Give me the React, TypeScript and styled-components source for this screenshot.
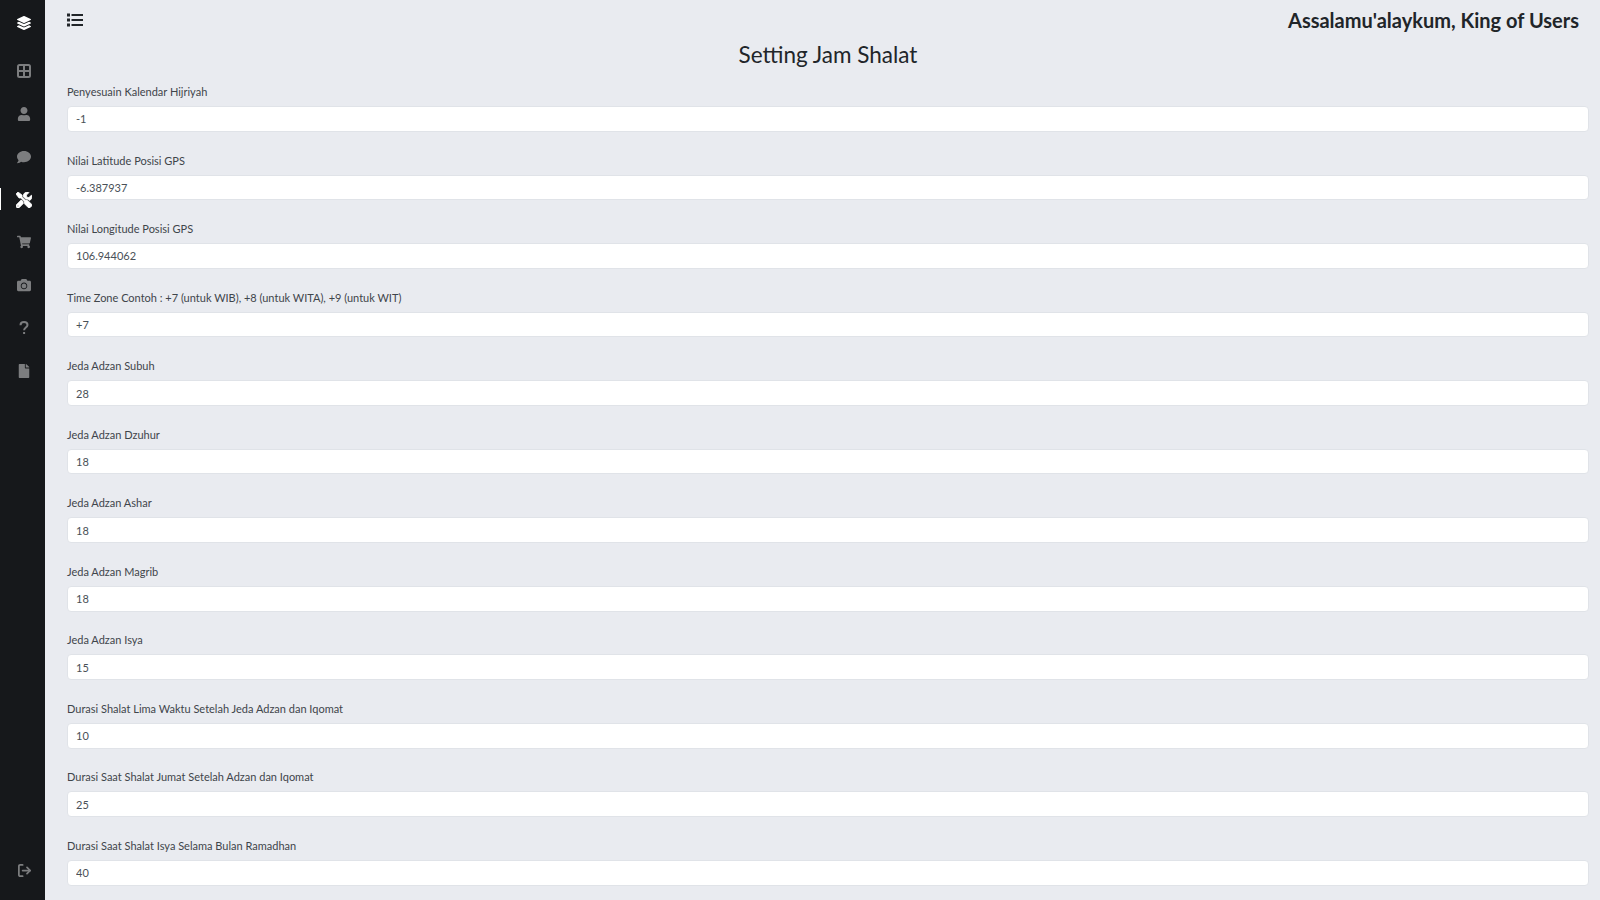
import React from 'react';
import styled, { createGlobalStyle } from 'styled-components';
import { LogOut } from 'lucide-react';
import {
  FaCamera,
  FaComment,
  FaFile,
  FaLayerGroup,
  FaShoppingCart,
  FaTools,
  FaUser,
} from 'react-icons/fa';

const fields = [
  { label: 'Penyesuain Kalendar Hijriyah', value: '-1' },
  { label: 'Nilai Latitude Posisi GPS', value: '-6.387937' },
  { label: 'Nilai Longitude Posisi GPS', value: '106.944062' },
  { label: 'Time Zone Contoh : +7 (untuk WIB), +8 (untuk WITA), +9 (untuk WIT)', value: '+7' },
  { label: 'Jeda Adzan Subuh', value: '28' },
  { label: 'Jeda Adzan Dzuhur', value: '18' },
  { label: 'Jeda Adzan Ashar', value: '18' },
  { label: 'Jeda Adzan Magrib', value: '18' },
  { label: 'Jeda Adzan Isya', value: '15' },
  { label: 'Durasi Shalat Lima Waktu Setelah Jeda Adzan dan Iqomat', value: '10' },
  { label: 'Durasi Saat Shalat Jumat Setelah Adzan dan Iqomat', value: '25' },
  { label: 'Durasi Saat Shalat Isya Selama Bulan Ramadhan', value: '40' },
];

const GridIcon = () => (
  <svg width="14" height="14" viewBox="0 0 14 14" fill="none" stroke="currentColor" strokeWidth="2">
    <rect x="1" y="1" width="12" height="12" rx="1.5" />
    <path d="M7 1v12M1 7h12" />
  </svg>
);

const QuestionIcon = () => (
  <svg width="10" height="14" viewBox="0 0 10 14" fill="none" stroke="currentColor" strokeWidth="2">
    <path d="M1.5 4.2C1.5 2.3 3 1 5 1s3.5 1.2 3.5 3c0 2.5-3.4 2.6-3.4 5.2" />
    <path d="M5.1 11v2" />
  </svg>
);

const ListIcon = () => (
  <svg width="16" height="14" viewBox="0 0 16 14" fill="none">
    <path d="M4.5 2H16M4.5 7H16M4.5 12H16" stroke="currentColor" strokeWidth="2" />
    <path d="M0 .5h3v3H0zM0 5.500h3v3H0zM0 10.500h3v3H0z" fill="currentColor" />
  </svg>
);

const menu = [
  { icon: <GridIcon /> },
  { icon: <FaUser /> },
  { icon: <FaComment /> },
  { icon: <FaTools />, active: true },
  { icon: <FaShoppingCart /> },
  { icon: <FaCamera /> },
  { icon: <QuestionIcon /> },
  { icon: <FaFile /> },
];

const App: React.FC = () => {
  return (
    <>
      <GlobalStyle />
      <Page>
        <Sidebar>
          <Logo>
            <FaLayerGroup />
          </Logo>
          <Menu>
            {menu.map((item, i) => (
              <MenuItem key={i} $active={item.active}>
                {item.icon}
              </MenuItem>
            ))}
          </Menu>
          <Logout>
            <LogOut size={15} strokeWidth={2.8} />
          </Logout>
        </Sidebar>
        <Main>
          <TopBar>
            <Toggle>
              <ListIcon />
            </Toggle>
            <Greeting>Assalamu'alaykum, King of Users</Greeting>
          </TopBar>
          <Title>Setting Jam Shalat</Title>
          <Form>
            {fields.map((f) => (
              <Field key={f.label}>
                <Label>{f.label}</Label>
                <Input defaultValue={f.value} />
              </Field>
            ))}
          </Form>
        </Main>
      </Page>
    </>
  );
};

export default App;

const GlobalStyle = createGlobalStyle`
  html, body {
    margin: 0;
    height: 100%;
    overflow: hidden;
    background: #e9ebf0;
    font-family: Lato, "Noto Sans", sans-serif;
  }
  * {
    box-sizing: border-box;
  }
`;

const Page = styled.div`
  display: flex;
  height: 900px;
  overflow: hidden;
`;

const Sidebar = styled.nav`
  width: 45px;
  flex-shrink: 0;
  height: 100%;
  display: flex;
  flex-direction: column;
  align-items: stretch;
  background: #16181b;
`;

const Logo = styled.div`
  height: 46px;
  padding-left: 3px;
  display: flex;
  align-items: center;
  justify-content: center;
  color: #fff;
  font-size: 14px;
`;

const Menu = styled.div`
  display: flex;
  flex-direction: column;
  padding-top: 4px;
`;

const MenuItem = styled.div<{ $active?: boolean }>`
  position: relative;
  height: 42.75px;
  padding-left: 3px;
  display: flex;
  align-items: center;
  justify-content: center;
  font-size: 14px;
  color: ${(p) => (p.$active ? '#fff' : '#7c7d7f')};
  svg {
    font-size: ${(p) => (p.$active ? '16px' : '14px')};
    ${(p) => (p.$active ? 'stroke: currentColor; stroke-width: 24px;' : '')}
  }
  &::before {
    content: '';
    display: ${(p) => (p.$active ? 'block' : 'none')};
    position: absolute;
    left: 0;
    top: 10px;
    width: 1px;
    height: 22px;
    background: #fff;
  }
`;

const Logout = styled.div`
  margin-top: auto;
  height: 42px;
  margin-bottom: 9px;
  padding-left: 3px;
  display: flex;
  align-items: center;
  justify-content: center;
  color: #7c7d7f;
`;

const Main = styled.main`
  flex: 1;
  min-width: 0;
  padding: 0 11px 0 22px;
`;

const TopBar = styled.header`
  height: 40px;
  display: flex;
  align-items: center;
  justify-content: space-between;
  padding-right: 10px;
`;

const Toggle = styled.div`
  display: flex;
  color: #212529;
  margin-top: -1px;
`;

const Greeting = styled.h5`
  margin: 0;
  font-size: 20px;
  font-weight: 700;
  color: #212529;
`;

const Title = styled.h3`
  margin: 0;
  height: 39px;
  line-height: 30px;
  text-align: center;
  font-size: 22.5px;
  font-weight: 400;
  color: #212529;
`;

const Form = styled.form`
  display: flex;
  flex-direction: column;
  gap: 15.8px;
`;

const Field = styled.div`
  display: flex;
  flex-direction: column;
`;

const Label = styled.label`
  height: 27px;
  padding-top: 6px;
  font-size: 11px;
  line-height: 14px;
  color: #3f454b;
`;

const Input = styled.input`
  display: block;
  width: 100%;
  height: 25.75px;
  padding: 0 8px;
  border: 1px solid #e0e3e8;
  border-radius: 4px;
  background: #fff;
  font-family: inherit;
  font-size: 11px;
  color: #495057;
  outline: none;
`;
